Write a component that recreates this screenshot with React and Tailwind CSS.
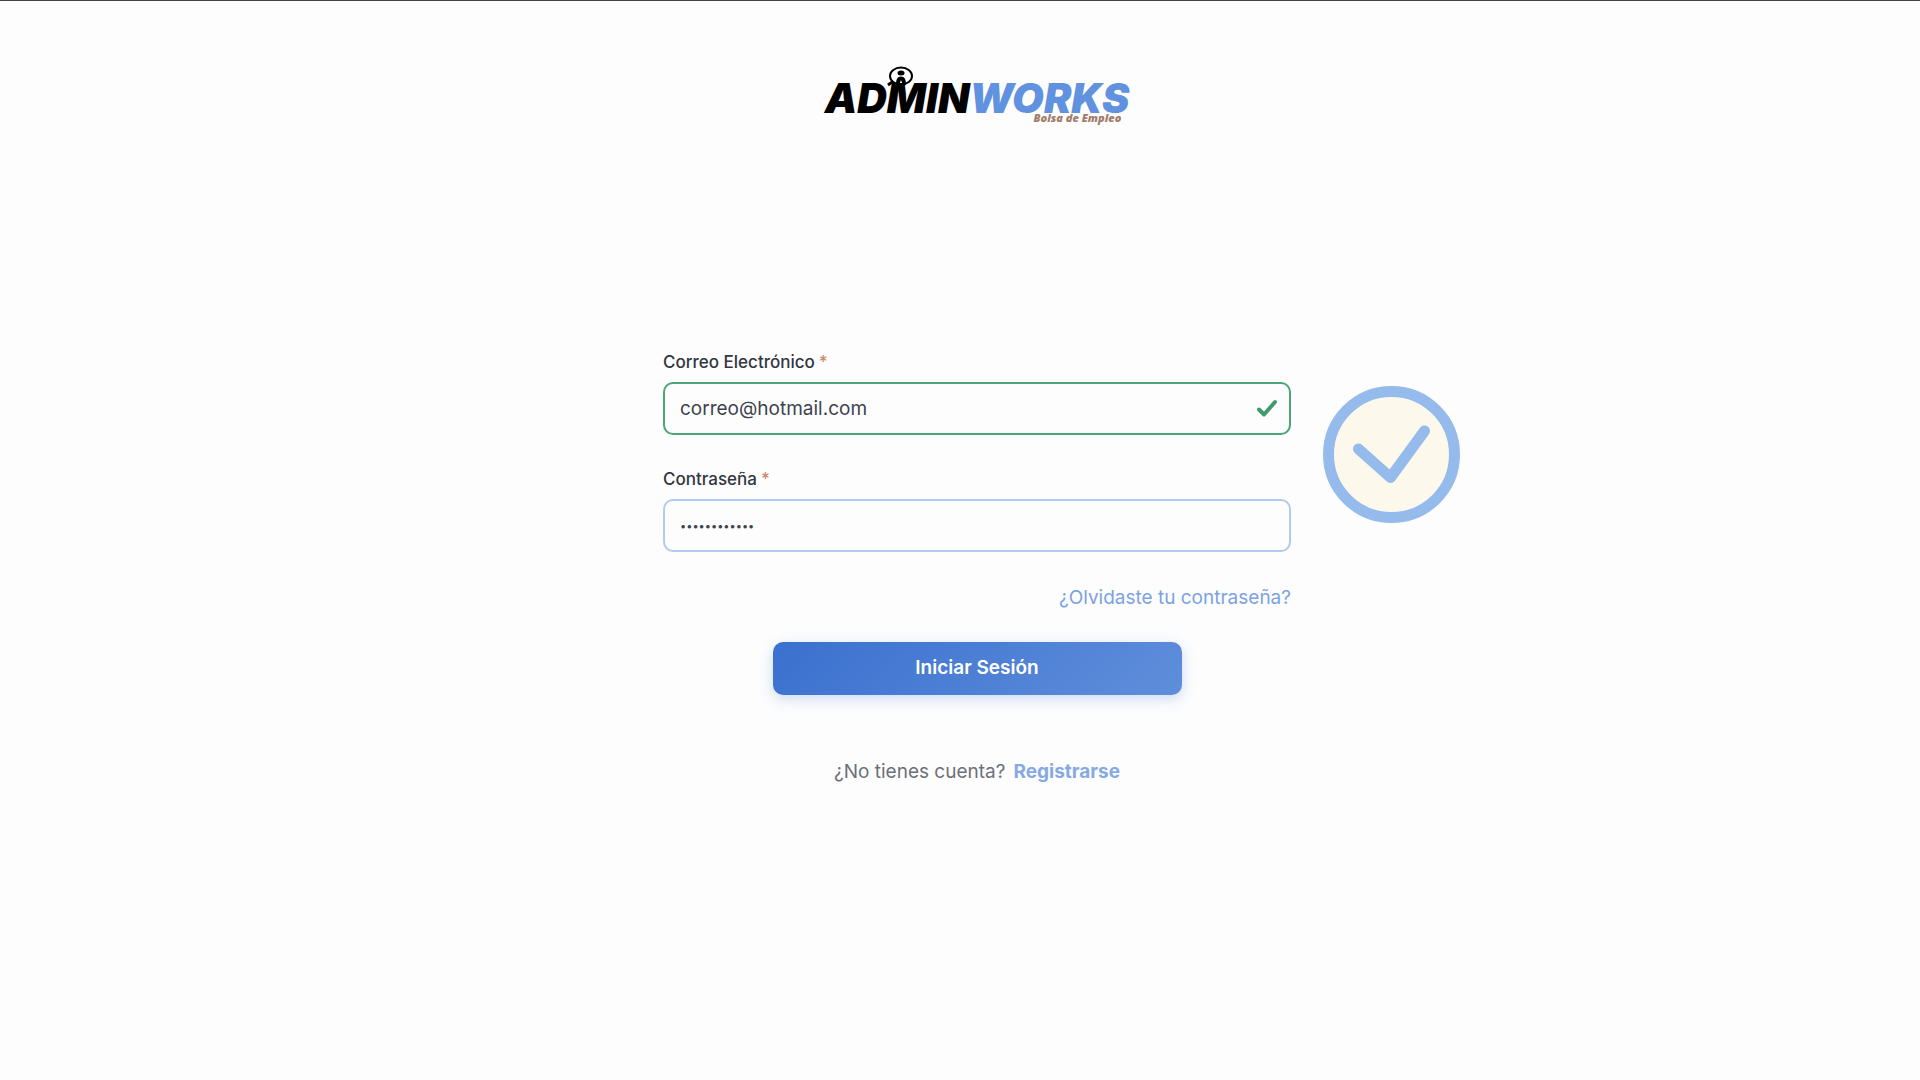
import { useState } from "react";

function Logo() {
    return (
        <a href="#inicio" aria-label="AdminWorks" className="relative flex flex-col font-['Inter',sans-serif] italic">
            <svg viewBox="0 0 26 22" className="absolute left-[62px] -top-[5px] h-[22px] w-[26px]" fill="none" aria-hidden="true">
                <ellipse cx="14" cy="10" rx="11" ry="8.500" fill="#fff" stroke="#000" strokeWidth="2" />
                <ellipse cx="14" cy="7" rx="3.500" ry="2.500" fill="#000" />
                <path d="M9 18c0-4.500 1.500-7.500 5-7.500s5 3 5 7.500l-2.500 3-2.500-7-2.500 7z" fill="#000" />
                <path d="M6 15.500 1 19" stroke="#000" strokeWidth="3" />
            </svg>
            <span className="relative pt-[13px] text-[41px] leading-[28px] font-black">
                <span className="text-black">ADMIN</span>
                <span className="text-[#6092df]">WORKS</span>
            </span>
            <span className="relative mr-2 self-end font-['Open_Sans',sans-serif] text-[11px] leading-[12px] font-extrabold text-[#a07d6c]">
                Bolsa de Empleo
            </span>
        </a>
    );
}

function Campo({ id, label, className, children, ...props }) {
    return (
        <div className="flex flex-col gap-2">
            <label htmlFor={id} className="flex gap-1 text-[17px] leading-6 font-medium text-[#32363f]">
                {label} <span className="text-[#c98a70]">*</span>
            </label>
            <div className="relative">
                <input
                    id={id}
                    className={`block h-[53px] w-full rounded-[10px] border-2 bg-[#fdfdfd] px-[15px] text-[#3d434f] outline-none ${className}`}
                    {...props}
                />
                {children}
            </div>
        </div>
    );
}

function App() {
    const [correo, setCorreo] = useState("correo@hotmail.com");
    const [password, setPassword] = useState("contrasena12");

    return (
        <div className="min-h-screen border-t border-[#454347] bg-[#fdfdfd] pl-[34px] font-['Inter',sans-serif]">
            <header className="flex h-[122px] justify-center pt-[70px]">
                <Logo />
            </header>

            <main className="relative mx-auto mt-[227px] w-full max-w-[628px]">
                <form className="flex flex-col" onSubmit={(event) => event.preventDefault()}>
                    <div className="flex flex-col gap-8">
                        <Campo
                            id="correo"
                            label="Correo Electrónico"
                            type="email"
                            value={correo}
                            onChange={(event) => setCorreo(event.target.value)}
                            className="border-[#4aa577] text-[19px]"
                        >
                            <svg viewBox="0 0 22 20" className="absolute right-[13px] top-[17px] h-5 w-[22px]" fill="none" aria-hidden="true">
                                <path d="M3 10.500 8 15.500 19 3" stroke="#429b70" strokeWidth="4" strokeLinecap="round" strokeLinejoin="round" />
                            </svg>
                        </Campo>
                        <Campo
                            id="password"
                            label="Contraseña"
                            type="password"
                            value={password}
                            onChange={(event) => setPassword(event.target.value)}
                            className="border-[#b3c9f0] text-[11px]"
                        />
                    </div>

                    <a href="#recuperar" className="mt-8 self-end text-[19px] leading-7 text-[#7ca2e2]">
                        ¿Olvidaste tu contraseña?
                    </a>

                    <button
                        type="submit"
                        className="mt-[30px] h-[53px] w-full max-w-[409px] cursor-pointer self-center rounded-[10px] bg-linear-135 from-[#3a70cf] to-[#5f8eda] text-[19px] font-semibold text-white shadow-[0_4px_14px_rgba(90,140,220,0.3)]"
                    >
                        Iniciar Sesión
                    </button>
                </form>

                <p className="mt-[63px] flex justify-center gap-2 text-[19px] leading-7 text-[#6d7078]">
                    ¿No tienes cuenta?
                    <a href="#registro" className="font-bold text-[#86a9e4]">Registrarse</a>
                </p>

                {/* sello de validación */}
                <svg viewBox="0 0 137 137" className="absolute left-full top-9 ml-8 size-[137px]" fill="none" aria-hidden="true">
                    <circle cx="68.500" cy="68.500" r="63" fill="#fcf8eb" stroke="#95baec" strokeWidth="11" />
                    <path d="M35.500 63 67.500 91.500 101.500 45" stroke="#95baec" strokeWidth="11" strokeLinecap="round" strokeLinejoin="round" />
                </svg>
            </main>
        </div>
    );
}

export default App;
